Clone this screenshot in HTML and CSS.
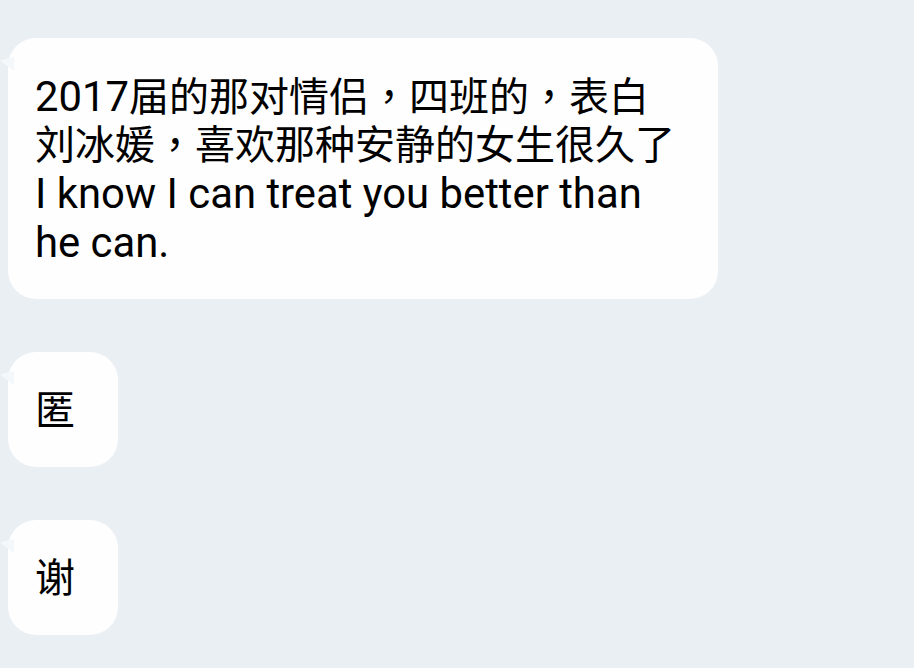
FILE: index.html
```html
<!DOCTYPE html>
<html lang="zh-CN">
<head>
<meta charset="utf-8">
<title>Chat</title>
<link rel="stylesheet" href="styles.css">
</head>
<body>
<main class="chat">
  <div class="bubble bubble-wide"><span class="en">2017</span>届的那对情侣<span class="punct" lang="zh-TW">，</span>四班的<span class="punct" lang="zh-TW">，</span>表白<br>刘冰媛<span class="punct" lang="zh-TW">，</span>喜欢那种安静的女生很久了<br><span class="en">I know I can treat you better than</span><br><span class="en">he can.</span></div>
  <div class="bubble bubble-small">匿</div>
  <div class="bubble bubble-small">谢</div>
</main>
</body>
</html>
```
FILE: styles.css
```css
html, body {
  margin: 0;
  padding: 0;
  background: #eaeff4;
}
body {
  width: 914px;
  height: 668px;
  overflow: hidden;
  font-family: Roboto, "Noto Sans CJK SC", sans-serif;
  color: #000;
}
.chat {
  display: flex;
  flex-direction: column;
  align-items: flex-start;
  gap: 53px;
  padding: 38px 0 0 8px;
}
.bubble {
  position: relative;
  background: #fefefe;
  border-radius: 28px;
  font-size: 40px;
  line-height: 48px;
  padding: 35px 27px 32px 27px;
  box-sizing: border-box;
}
.bubble::before {
  content: "";
  position: absolute;
  left: -8px;
  top: 19px;
  width: 14px;
  height: 14px;
  background: #f5f8fb;
  clip-path: polygon(0 25%, 100% 0, 100% 100%);
}
.en {
  font-size: 41.8px;
}
.punct {
  font-family: "Noto Sans CJK TC", "Noto Sans CJK SC", sans-serif;
  line-height: 1;
}
.bubble-wide {
  width: 710px;
  height: 261px;
}
.bubble-small {
  width: 110px;
  height: 115px;
}
```
